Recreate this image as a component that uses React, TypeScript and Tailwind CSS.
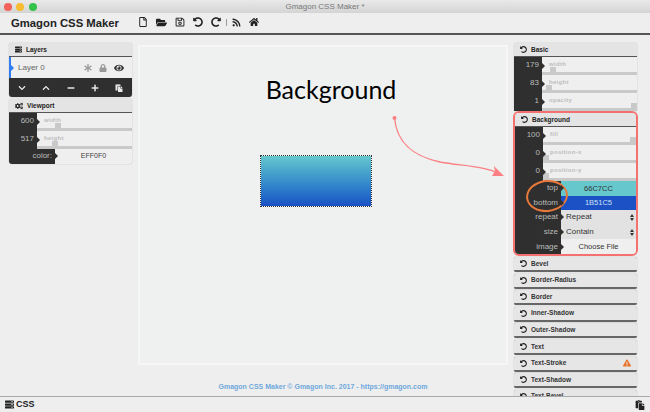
import React from "react";
import {
  FaAsterisk,
  FaChevronDown,
  FaChevronUp,
  FaCogs,
  FaExclamationTriangle,
  FaEye,
  FaFolderOpen,
  FaHome,
  FaLock,
  FaMinus,
  FaPaste,
  FaPlus,
  FaRedoAlt,
  FaRegFile,
  FaRegSave,
  FaRss,
  FaServer,
  FaUndoAlt,
} from "react-icons/fa";

const Notch = () => (
  <span className="absolute right-[-3px] top-1/2 -translate-y-1/2 border-y-[3px] border-l-[3px] border-y-transparent border-l-[#2f2f2f] z-10" />
);

const PanelHeader = ({ icon, title }: { icon: React.ReactNode; title: string }) => (
  <div className="h-[14px] flex items-center pl-[6px] gap-[4px] bg-[#e4e4e4] border-b border-[#555] text-[6.5px] font-bold text-[#222]">
    {icon}
    {title}
  </div>
);

const SliderRow = ({ value, label, thumb }: { value: number; label: string; thumb: number }) => (
  <div className="h-[18px] flex">
    <div className="relative w-[28px] bg-[#2f2f2f] text-[#bbb] text-[8px] flex items-center justify-end pr-[3px] pb-[3px]">
      {value}
      <Notch />
    </div>
    <div className="relative flex-1 bg-[#efefef]">
      <div className="pl-[7px] pt-[3px] text-[6px] font-bold text-[#bdbdbd] tracking-[0.3px] leading-[9px]">{label}</div>
      <div className="absolute left-0 right-0 bottom-0 h-[3px] bg-[#c9c9c9]" />
      <div className="absolute bottom-0 w-[6px] h-[8px] bg-[#c9c9c9]" style={{ left: thumb }} />
    </div>
  </div>
);

const FieldRow = ({
  label,
  children,
  className,
  width = "w-[46px]",
}: {
  label: string;
  children: React.ReactNode;
  className?: string;
  width?: string;
}) => (
  <div className="h-[14.6px] flex">
    <div className={`relative ${width} bg-[#2f2f2f] text-[#bbb] text-[8px] flex items-center justify-end pr-[3px] shrink-0`}>
      {label}
      <Notch />
    </div>
    <div className={`flex-1 flex items-center ${className}`}>{children}</div>
  </div>
);

const SelectField = ({ value }: { value: string }) => (
  <div className="w-full h-full flex items-center justify-between pl-[5px] pr-[2px] bg-[#e2e2e2] text-[8px] text-[#333]">
    {value}
    <span className="flex flex-col gap-[1px]">
      <span className="border-x-[2px] border-b-[3px] border-x-transparent border-b-[#333]" />
      <span className="border-x-[2px] border-t-[3px] border-x-transparent border-t-[#333]" />
    </span>
  </div>
);

const Collapsed = ({ title, warn }: { title: string; warn?: boolean }) => (
  <div className="h-[15px] mb-[1.6px] shrink-0 flex items-center pl-[6px] gap-[4px] bg-[#e6e6e6] rounded-[2px] border-b-2 border-[#666] shadow-[0_0_1px_#888] text-[6.5px] font-bold text-[#333] relative">
    <FaUndoAlt className="text-[7px] text-[#222]" />
    {title}
    {warn && <FaExclamationTriangle className="absolute right-[6px] text-[8px] text-[#e8742c]" />}
  </div>
);

export default function App() {
  const resetIcon = <FaUndoAlt className="text-[7px] text-[#222]" />;
  return (
    <div className="relative w-[650px] h-[412px] overflow-hidden flex flex-col bg-[#eeeeee] font-['Liberation_Sans',sans-serif]">
      {/* title bar */}
      <div className="h-[13px] shrink-0 relative flex items-center justify-center bg-gradient-to-b from-[#e9e9e9] to-[#d4d4d4] text-[8px] text-[#777]">
        <div className="absolute left-[3.5px] flex gap-[4.5px]">
          <span className="w-[8px] h-[8px] rounded-full bg-[#f4605a]" />
          <span className="w-[8px] h-[8px] rounded-full bg-[#f6bb30]" />
          <span className="w-[8px] h-[8px] rounded-full bg-[#34c24a]" />
        </div>
        Gmagon CSS Maker *
      </div>

      {/* toolbar */}
      <div className="h-[22px] shrink-0 flex items-center pl-[11px] bg-[#eeeeee] border-b-2 border-[#555]">
        <span className="w-[127px] text-[11.3px] font-bold text-[#222]">Gmagon CSS Maker</span>
        <div className="flex items-center gap-[8px] text-[10px] text-[#222] pb-[2px]">
          <FaRegFile />
          <FaFolderOpen className="text-[11px]" />
          <FaRegSave />
          <FaUndoAlt />
          <FaRedoAlt />
          <span className="w-px h-[7px] bg-[#999] -mx-[3px]" />
          <FaRss className="text-[9px]" />
          <FaHome className="text-[10px]" />
        </div>
      </div>

      {/* main */}
      <div className="flex-1 min-h-0 flex overflow-hidden">
        <div className="w-[123px] ml-[9px] mt-[8px] shrink-0 flex flex-col gap-[2px]">
          <div className="rounded-[3px] overflow-hidden shadow-[0_0_1px_#888]">
            <PanelHeader icon={<FaServer className="text-[7px] text-[#222]" />} title="Layers" />
            <div className="relative h-[21px] flex items-center pl-[7px] pr-[8px] bg-[#efefef] border-l-[2px] border-[#2f7df0] text-[8px] text-[#666]">
              <span className="absolute left-0 top-1/2 -translate-y-1/2 border-y-[3px] border-l-[3px] border-y-transparent border-l-[#2f7df0]" />
              Layer 0
              <div className="ml-auto flex items-center gap-[7px] text-[#999]">
                <FaAsterisk className="text-[8px]" />
                <FaLock className="text-[8px]" />
                <FaEye className="text-[10px] text-[#333]" />
              </div>
            </div>
            <div className="h-[19px] flex items-center justify-between px-[9px] bg-[#2f2f2f] text-[#e8e8e8] text-[8px]">
              <FaChevronDown />
              <FaChevronUp />
              <FaMinus />
              <FaPlus />
              <FaPaste />
            </div>
          </div>
          <div className="rounded-[3px] overflow-hidden shadow-[0_0_1px_#888]">
            <PanelHeader icon={<FaCogs className="text-[8px] text-[#222]" />} title="Viewport" />
            <SliderRow value={600} label="width" thumb={18} />
            <SliderRow value={517} label="height" thumb={15} />
            <FieldRow label="color:" className="justify-center bg-[#efefef] text-[7px] text-[#444]">
              EFF0F0
            </FieldRow>
          </div>
        </div>

        <div className="w-[370px] ml-[6px] shrink-0 flex flex-col items-center pt-[10px]">
          <div className="w-[370px] h-[320px] shrink-0 flex flex-col items-center border-2 border-[#f6f6f6] bg-[#eff0f0]">
            <div className="mt-[24px] ml-[16px] text-[25px] leading-[36px] text-black font-['Lato',sans-serif]">
              Background
            </div>
            <div className="mt-[48px] -ml-[15px] w-[112px] h-[52px] border border-dotted border-[#333] bg-clip-padding bg-gradient-to-b from-[#66c7cc] to-[#1b51c5]" />
          </div>
          <div className="mt-[17px] text-[7px] font-bold text-[#6fa8dc]">
            Gmagon CSS Maker © Gmagon Inc. 2017 - https://gmagon.com
          </div>
        </div>

        <div className="w-[123px] ml-[6px] mt-[8px] shrink-0 flex flex-col">
          <div className="rounded-t-[3px] overflow-hidden shrink-0 shadow-[0_0_1px_#888]">
            <PanelHeader icon={resetIcon} title="Basic" />
            <SliderRow value={179} label="width" thumb={8} />
            <SliderRow value={83} label="height" thumb={4} />
            <SliderRow value={1} label="opacity" thumb={89} />
          </div>
          <div className="-mx-[1px] shrink-0 rounded-[6px] border-2 border-[#f4716f] overflow-hidden mb-[1px]">
            <PanelHeader icon={resetIcon} title="Background" />
            <SliderRow value={100} label="fill" thumb={87} />
            <SliderRow value={0} label="position-x" thumb={0} />
            <SliderRow value={0} label="position-y" thumb={0} />
            <FieldRow label="top" className="justify-center bg-[#66c7cc] text-[7.5px] text-[#333]">
              66C7CC
            </FieldRow>
            <FieldRow label="bottom" className="justify-center bg-[#1b51c5] text-[7.5px] text-[#cfe0f5]">
              1B51C5
            </FieldRow>
            <FieldRow label="repeat" className="bg-[#efefef]">
              <SelectField value="Repeat" />
            </FieldRow>
            <FieldRow label="size" className="bg-[#efefef]">
              <SelectField value="Contain" />
            </FieldRow>
            <FieldRow label="image" className="justify-center bg-[#efefef] text-[7.5px] text-[#333]">
              Choose File
            </FieldRow>
          </div>
          <Collapsed title="Bevel" />
          <Collapsed title="Border-Radius" />
          <Collapsed title="Border" />
          <Collapsed title="Inner-Shadow" />
          <Collapsed title="Outer-Shadow" />
          <Collapsed title="Text" />
          <Collapsed title="Text-Stroke" warn />
          <Collapsed title="Text-Shadow" />
          <Collapsed title="Text-Bevel" />
        </div>
      </div>

      {/* bottom bar */}
      <div className="h-[16px] shrink-0 flex items-center px-[5px] gap-[2px] bg-[#eeeeee] border-t border-[#aaa] text-[9px] font-bold text-[#222]">
        <FaServer className="text-[9px]" />
        CSS
        <FaPaste className="ml-auto text-[10px]" />
      </div>

      {/* annotation overlays */}
      <svg className="absolute left-0 top-0 pointer-events-none" width="650" height="412" fill="none">
        <circle cx="394.5" cy="118" r="2" fill="#fb8083" />
        <path d="M394.5 118 C397 146 417 157 440 162 C462 166 485 166 500 174" stroke="#fb8083" strokeWidth="1.3" />
        <path d="M504 176 L492 176 L495 171 L494 166 Z" fill="#fb8083" />
      </svg>
      <div className="absolute left-[526px] top-[180px] w-[42px] h-[32px] rounded-[50%] border-2 border-[#e8793a] -rotate-6" />
    </div>
  );
}
